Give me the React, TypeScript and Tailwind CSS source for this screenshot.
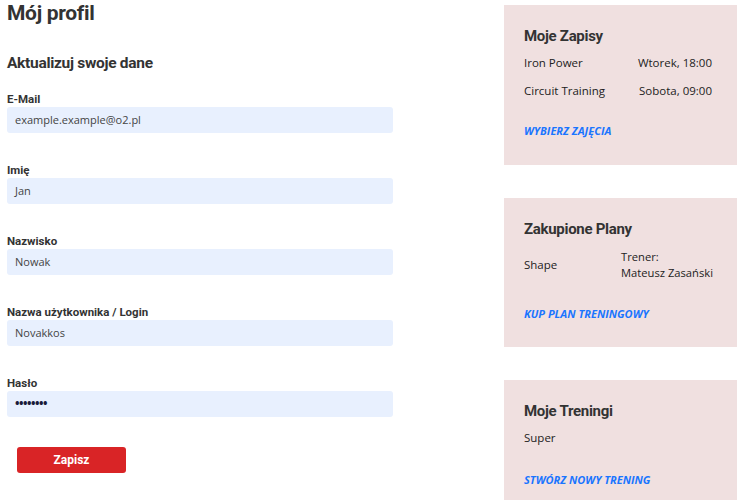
import React from "react";

const heading = { fontFamily: 'Roboto, "DejaVu Sans Condensed", sans-serif' };
const body = { fontFamily: '"Open Sans", "Liberation Sans", sans-serif' };

const fields = [
  { label: "E-Mail", value: "example.example@o2.pl", type: "text" },
  { label: "Imię", value: "Jan", type: "text" },
  { label: "Nazwisko", value: "Nowak", type: "text" },
  { label: "Nazwa użytkownika / Login", value: "Novakkos", type: "text" },
  { label: "Hasło", value: "••••••••", type: "password" },
];

function Panel({
  title,
  link,
  linkGap,
  className,
  children,
}: {
  title: string;
  link: string;
  linkGap: string;
  className: string;
  children: React.ReactNode;
}) {
  return (
    <div className={"bg-[#f0e0e0] pl-5 pr-[25px] pt-[22px] " + className}>
      <h3 style={heading} className="text-[15px] font-bold leading-[18px] tracking-[-0.3px] text-[#333]">
        {title}
      </h3>
      <div style={body} className="mt-[11px] text-[11.5px] text-[#222]">
        {children}
      </div>
      <div style={body} className={"text-[11px] font-bold italic leading-[14px] text-[#1a75ff] " + linkGap}>
        {link}
      </div>
    </div>
  );
}

export default function App() {
  return (
    <main className="flex min-h-[500px] w-[744px] justify-between overflow-hidden bg-white px-[7px]">
      <section className="w-[386px]">
        <h1 style={heading} className="mt-[1px] text-[21px] font-bold leading-6 tracking-[-0.3px] text-[#333]">
          Mój profil
        </h1>
        <h2 style={heading} className="mt-[28px] text-[15.5px] font-bold leading-5 tracking-[-0.3px] text-[#333]">
          Aktualizuj swoje dane
        </h2>
        <div className="mt-[19px] flex flex-col gap-[30px]">
          {fields.map((f) => (
            <div key={f.label}>
              <label style={heading} className="block text-[11.5px] font-bold leading-[14px] text-[#333]">
                {f.label}
              </label>
              <div
                style={body}
                className={
                  "mt-[1px] flex h-[26px] items-center rounded-[3px] bg-[#e8f0fe] px-2 " +
                  (f.type === "password" ? "text-[12px] font-bold tracking-[-0.5px] text-[#1a1a3a]" : "text-[11px] text-[#444]")
                }
              >
                {f.value}
              </div>
            </div>
          ))}
        </div>
        <button
          style={heading}
          className="ml-[10px] mt-[30px] h-[26px] w-[109px] rounded-[3px] bg-[#d92426] text-[12px] font-bold text-white"
        >
          Zapisz
        </button>
      </section>

      <aside className="flex w-[233px] flex-col gap-[33px] pt-[5px]">
        <Panel title="Moje Zapisy" link="WYBIERZ ZAJĘCIA" linkGap="mt-[26px]" className="h-[160px]">
          <div className="flex justify-between leading-[14px]">
            <span>Iron Power</span>
            <span>Wtorek, 18:00</span>
          </div>
          <div className="mt-[14px] flex justify-between leading-[14px]">
            <span>Circuit Training</span>
            <span>Sobota, 09:00</span>
          </div>
        </Panel>
        <Panel title="Zakupione Plany" link="KUP PLAN TRENINGOWY" linkGap="mt-[26px]" className="h-[149px]">
          <div className="grid grid-cols-[97px_1fr] items-center whitespace-nowrap leading-4">
            <span>Shape</span>
            <span className="text-[11.2px]">
              Trener:
              <br />
              Mateusz Zasański
            </span>
          </div>
        </Panel>
        <Panel title="Moje Treningi" link="STWÓRZ NOWY TRENING" linkGap="mt-[28px]" className="h-[130px]">
          <div className="leading-[14px]">Super</div>
        </Panel>
      </aside>
    </main>
  );
}
